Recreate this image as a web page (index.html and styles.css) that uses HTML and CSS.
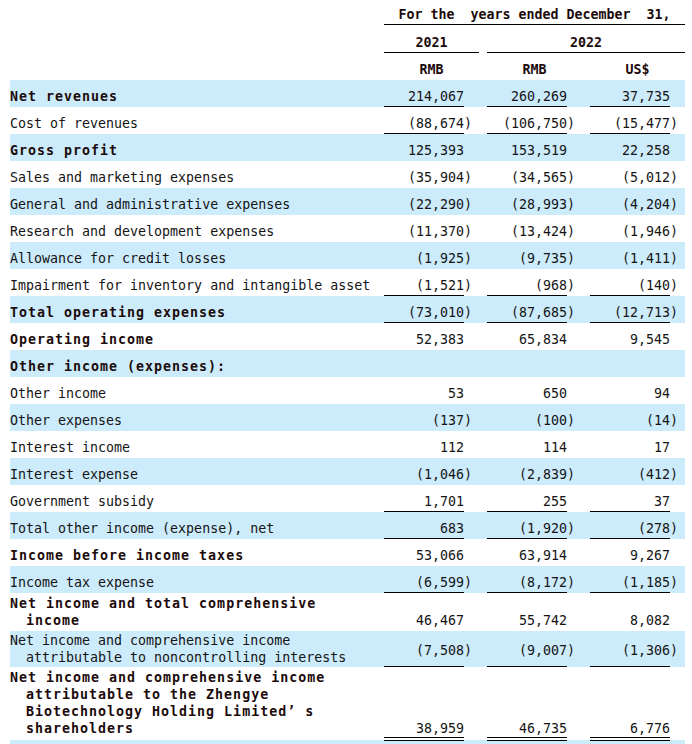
FILE: index.html
```html
<!DOCTYPE html>
<html lang="en">
<head>
<meta charset="utf-8">
<title>Consolidated statements of income</title>
<link rel="stylesheet" href="styles.css">
</head>
<body>
<div class="stmt">
  <div class="hrow h1"><div class="period">For the  years ended December  31,</div></div>
  <div class="hrow h2"><div class="yr y21">2021</div><div class="yr y22">2022</div></div>
  <div class="hrow h3"><div class="cur">RMB</div><div class="cur">RMB</div><div class="cur">US$</div></div>

  <div class="row band b"><div class="lbl">Net revenues</div><div class="num ul">214,067</div><div class="num ul">260,269</div><div class="num ul">37,735</div></div>
  <div class="row"><div class="lbl">Cost of revenues</div><div class="num ul">(88,674<span class="cp">)</span></div><div class="num ul">(106,750<span class="cp">)</span></div><div class="num ul">(15,477<span class="cp">)</span></div></div>
  <div class="row band b"><div class="lbl">Gross profit</div><div class="num">125,393</div><div class="num">153,519</div><div class="num">22,258</div></div>
  <div class="row"><div class="lbl">Sales and marketing expenses</div><div class="num">(35,904<span class="cp">)</span></div><div class="num">(34,565<span class="cp">)</span></div><div class="num">(5,012<span class="cp">)</span></div></div>
  <div class="row band"><div class="lbl">General and administrative expenses</div><div class="num">(22,290<span class="cp">)</span></div><div class="num">(28,993<span class="cp">)</span></div><div class="num">(4,204<span class="cp">)</span></div></div>
  <div class="row"><div class="lbl">Research and development expenses</div><div class="num">(11,370<span class="cp">)</span></div><div class="num">(13,424<span class="cp">)</span></div><div class="num">(1,946<span class="cp">)</span></div></div>
  <div class="row band"><div class="lbl">Allowance for credit losses</div><div class="num">(1,925<span class="cp">)</span></div><div class="num">(9,735<span class="cp">)</span></div><div class="num">(1,411<span class="cp">)</span></div></div>
  <div class="row"><div class="lbl">Impairment for inventory and intangible asset</div><div class="num ul">(1,521<span class="cp">)</span></div><div class="num ul">(968<span class="cp">)</span></div><div class="num ul">(140<span class="cp">)</span></div></div>
  <div class="row band b"><div class="lbl">Total operating expenses</div><div class="num ul">(73,010<span class="cp">)</span></div><div class="num ul">(87,685<span class="cp">)</span></div><div class="num ul">(12,713<span class="cp">)</span></div></div>
  <div class="row b"><div class="lbl">Operating income</div><div class="num">52,383</div><div class="num">65,834</div><div class="num">9,545</div></div>
  <div class="row band b"><div class="lbl">Other income (expenses):</div><div class="num"></div><div class="num"></div><div class="num"></div></div>
  <div class="row"><div class="lbl">Other income</div><div class="num">53</div><div class="num">650</div><div class="num">94</div></div>
  <div class="row band"><div class="lbl">Other expenses</div><div class="num">(137<span class="cp">)</span></div><div class="num">(100<span class="cp">)</span></div><div class="num">(14<span class="cp">)</span></div></div>
  <div class="row"><div class="lbl">Interest income</div><div class="num">112</div><div class="num">114</div><div class="num">17</div></div>
  <div class="row band"><div class="lbl">Interest expense</div><div class="num">(1,046<span class="cp">)</span></div><div class="num">(2,839<span class="cp">)</span></div><div class="num">(412<span class="cp">)</span></div></div>
  <div class="row"><div class="lbl">Government subsidy</div><div class="num ul">1,701</div><div class="num ul">255</div><div class="num ul">37</div></div>
  <div class="row band"><div class="lbl">Total other income (expense), net</div><div class="num ul">683</div><div class="num ul">(1,920<span class="cp">)</span></div><div class="num ul">(278<span class="cp">)</span></div></div>
  <div class="row b"><div class="lbl">Income before income taxes</div><div class="num">53,066</div><div class="num">63,914</div><div class="num">9,267</div></div>
  <div class="row band"><div class="lbl">Income tax expense</div><div class="num ul">(6,599<span class="cp">)</span></div><div class="num ul">(8,172<span class="cp">)</span></div><div class="num ul">(1,185<span class="cp">)</span></div></div>
  <div class="row b two"><div class="lbl">Net income and total comprehensive<br>income</div><div class="num">46,467</div><div class="num">55,742</div><div class="num">8,082</div></div>
  <div class="row band nci"><div class="lbl">Net income and comprehensive income<br>attributable to noncontrolling interests</div><div class="num ul">(7,508<span class="cp">)</span></div><div class="num ul">(9,007<span class="cp">)</span></div><div class="num ul">(1,306<span class="cp">)</span></div></div>
  <div class="row b four"><div class="lbl">Net income and comprehensive income<br>attributable to the Zhengye<br>Biotechnology Holding Limited<span class="fw">’</span>s<br>shareholders</div><div class="num dbl">38,959</div><div class="num dbl">46,735</div><div class="num dbl">6,776</div></div>
  <div class="row band"><div class="lbl"></div><div class="num"></div><div class="num"></div><div class="num"></div></div>
</div>
</body>
</html>
```

FILE: styles.css
```css
html, body {
  margin: 0;
  padding: 0;
  background: #ffffff;
}

body {
  font-family: "DejaVu Sans Mono", "Liberation Mono", "Noto Sans CJK SC", monospace;
  font-size: 13.3px;
  color: #141414;
}

.stmt {
  width: 675px;
  margin-left: 10px;
}

.hrow,
.row {
  display: grid;
  grid-template-columns: 366px 95px 95px 95px;
  column-gap: 8px;
  box-sizing: border-box;
}

/* header */
.hrow {
  font-weight: bold;
  color: #1c0b0b;
  line-height: 17px;
  text-align: center;
}

.h1 { height: 25px; }
.h2 { height: 28px; }
.h3 { height: 27px; }

.period {
  grid-column: 2 / 5;
  white-space: pre;
  padding-top: 6px;
  border-bottom: 1px solid #000;
  box-sizing: border-box;
}

.yr {
  padding-top: 9px;
  border-bottom: 1px solid #000;
  box-sizing: border-box;
}

.y21 { grid-column: 2 / 3; }
.y22 { grid-column: 3 / 5; }

.cur {
  padding-top: 8px;
}

.h3 .cur:first-child { grid-column: 2 / 3; }

/* body rows */
.row {
  height: 27px;
  line-height: 17px;
}

.band {
  background: #ccebfb;
}

.lbl {
  padding-top: 8px;
  white-space: nowrap;
  padding-left: 16px;
  text-indent: -16px;
}

.b .lbl {
  font-weight: bold;
  letter-spacing: 1px;
  color: #1c0b0b;
}

.num {
  width: 80px;
  box-sizing: border-box;
  padding-top: 8px;
  text-align: right;
  white-space: nowrap;
}

.cp {
  margin-right: -8px;
}

.ul {
  border-bottom: 1px solid #000;
}

.dbl {
  border-bottom: 4px double #000;
}

.two { height: 38px; }
.two .lbl { padding-top: 2px; }
.two .num { padding-top: 19px; }

.nci { height: 36px; }
.nci .lbl { padding-top: 1px; }
.nci .num { padding-top: 11px; }

.four { height: 73px; }
.four .lbl { padding-top: 2px; }
.four .num { padding-top: 53px; }

.fw {
  display: inline-block;
  width: 18px;
  text-indent: 0;
  letter-spacing: 0;
}
```
